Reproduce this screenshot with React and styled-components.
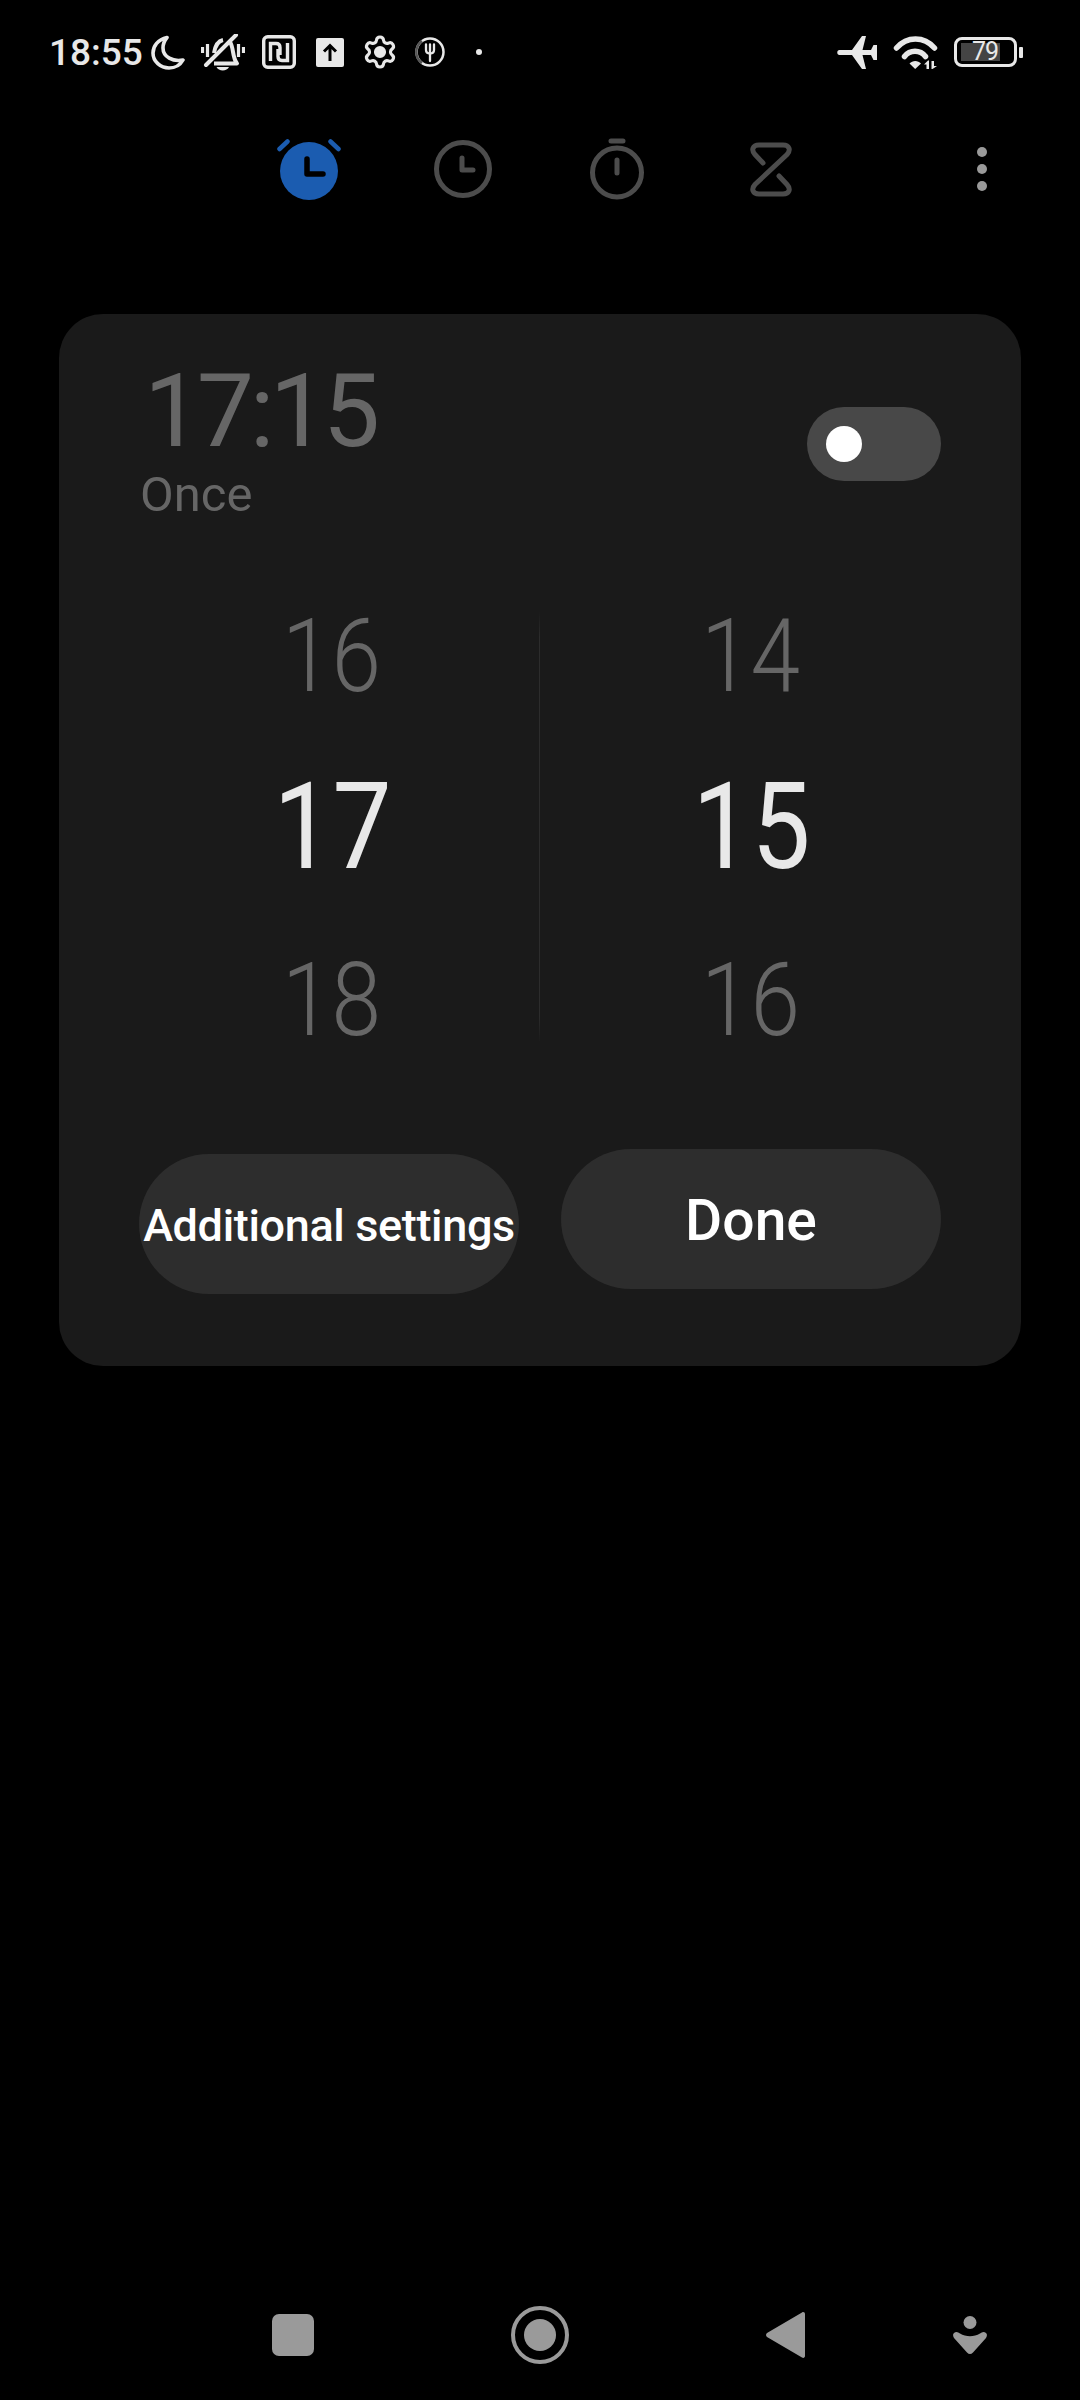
import React from 'react'
import styled, { createGlobalStyle } from 'styled-components'
import { Settings } from 'lucide-react'

const GlobalStyle = createGlobalStyle`
    html, body {
        margin: 0;
        background: #000;
    }
    * {
        box-sizing: border-box;
    }
`

const StatusIcon = ({ w, h, ml, children }) => (
    <StatusSvg width={w} height={h} viewBox={`0 0 ${w} ${h}`} $ml={ml}>{children}</StatusSvg>
)

const MoonIcon = () => (
    <StatusIcon w={34} h={35} ml={8}>
        <path d="M16 2.500C7 4.500 2 11 2 18C2 26.500 9.500 33 18 33C24.500 33 29.500 29.500 32 25C22 27 12 22 12 13C12 9 13.500 5.500 16 2.500Z" fill="none" stroke="#e8e8e8" strokeWidth="3.600" strokeLinejoin="round" />
    </StatusIcon>
)

const BellOffIcon = () => (
    <StatusIcon w={44} h={37} ml={16}>
        <g fill="none" stroke="#e8e8e8" strokeWidth="3.200">
            <path d="M1.500 13V19M6.500 10V23M37.500 10V23M42.500 13V19" />
            <path d="M13 19C14 13 17 7 22 6M29 8C33 14 31 23 36 29.500H13" strokeLinejoin="round" strokeWidth="4" />
            <path d="M5 31L35 1" strokeWidth="4" strokeLinecap="round" />
        </g>
        <path d="M15.500 33H28C26 37.500 17.500 37.500 15.500 33Z" fill="#e8e8e8" />
    </StatusIcon>
)

const NfcIcon = () => (
    <StatusIcon w={34} h={34} ml={17}>
        <g fill="none" stroke="#e8e8e8" strokeWidth="3.400">
            <rect x="1.700" y="1.700" width="30.600" height="30.600" rx="4" />
            <path d="M8.500 26V8.500H14C16.500 8.500 18 10 18 12.500V20" />
            <path d="M25.500 8V25.500H20C17.500 25.500 16 24 16 21.500V14" />
        </g>
    </StatusIcon>
)

const UploadIcon = () => (
    <StatusIcon w={28} h={29} ml={20}>
        <rect width="28" height="29" rx="2" fill="#e8e8e8" />
        <path d="M14 23V8M8 13.500L14 7.500L20 13.500" fill="none" stroke="#000" strokeWidth="3" />
    </StatusIcon>
)

const FoodIcon = () => (
    <StatusIcon w={30} h={30} ml={17}>
        <circle cx="15" cy="15" r="13.500" fill="none" stroke="#e8e8e8" strokeWidth="2.500" />
        <path d="M7 4A13.500 13.500 0 0 0 7 26" fill="none" stroke="#555" strokeWidth="2.500" />
        <path d="M11 7.500V13C11 15.500 13 16.500 15 16.500C17 16.500 19 15.500 19 13V7.500M15 7.500V24" fill="none" stroke="#e8e8e8" strokeWidth="2.300" strokeLinecap="round" />
    </StatusIcon>
)

const PlaneIcon = () => (
    <StatusIcon w={40} h={35} ml={0}>
        <path d="M2.500 15H15L25 1H29L25.500 15H34L36.500 10H40V25H36.500L34 20H25.500L29 34H25L15 20H2.500C-0.500 20 -0.500 15 2.500 15Z" fill="#e8e8e8" />
    </StatusIcon>
)

const WifiIcon = () => (
    <StatusIcon w={47} h={34} ml={16}>
        <g fill="none" stroke="#e8e8e8" strokeWidth="5.500" strokeLinecap="round">
            <path d="M3.500 13C14 1 31 1 41.500 13" />
            <path d="M11.500 21.500C17 14.500 27 14.500 32.500 21.500" />
        </g>
        <path d="M16.500 28.500C19.500 25 25 25 28 28.500L22.200 34Z" fill="#e8e8e8" />
        <path d="M31 29.500L35 25.500H36V34H33.500V29.500ZM38.500 26H41V31H44L39.500 34H38.500Z" fill="#e8e8e8" />
    </StatusIcon>
)

const AlarmIcon = () => (
    <svg width="64" height="61" viewBox="0 0 64 61">
        <circle cx="32" cy="32" r="29" fill="#1b5cb0" />
        <path d="M2.500 10L10.500 2.500M53.500 2.500L61.500 10" fill="none" stroke="#1b5cb0" strokeWidth="4.500" strokeLinecap="round" />
        <path d="M30 20V35H46" fill="none" stroke="#000" strokeWidth="5.500" strokeLinecap="round" strokeLinejoin="round" />
    </svg>
)

const ClockIcon = () => (
    <svg width="58" height="58" viewBox="0 0 58 58" fill="none" stroke="#4c4c4c" strokeWidth="5">
        <circle cx="29" cy="29" r="26.500" />
        <path d="M28 18V30H39" strokeLinecap="round" strokeLinejoin="round" />
    </svg>
)

const StopwatchIcon = () => (
    <svg width="54" height="62" viewBox="0 0 54 62" fill="none" stroke="#4c4c4c" strokeWidth="5" strokeLinecap="round">
        <circle cx="27" cy="34.500" r="24.500" />
        <path d="M21 3H33M27 22V35" />
    </svg>
)

const TimerIcon = () => (
    <svg width="42" height="55" viewBox="0 0 42 55" fill="none" stroke="#4c4c4c" strokeWidth="5" strokeLinecap="round">
        <path d="M13 21L5 12.500C1 8 2.500 3 9 3H33C39.500 3 41 8 37 12.500L5 42.500C1 47 2.500 52 9 52H33C39.500 52 41 47 37 42.500L29 34" />
    </svg>
)

const MenuIcon = () => (
    <svg width="10" height="44" viewBox="0 0 10 44" fill="#9a9a9a">
        <circle cx="5" cy="5" r="5" />
        <circle cx="5" cy="22" r="5" />
        <circle cx="5" cy="39" r="5" />
    </svg>
)

const NavSquare = () => (
    <svg width="42" height="42" viewBox="0 0 42 42">
        <rect width="42" height="42" rx="7" fill="#9a9a9a" />
    </svg>
)

const NavHome = () => (
    <svg width="58" height="58" viewBox="0 0 58 58" fill="#9a9a9a">
        <circle cx="29" cy="29" r="27" fill="none" stroke="#9a9a9a" strokeWidth="4" />
        <circle cx="29" cy="29" r="16" />
    </svg>
)

const NavBack = () => (
    <svg width="39" height="48" viewBox="0 0 39 48">
        <path d="M36 1.500C37.500 0.500 39 1.500 39 3V45C39 46.500 37.500 47.500 36 46.500L1 26C-0.300 25 -0.300 23 1 22Z" fill="#9a9a9a" />
    </svg>
)

const NavAccessibility = () => (
    <svg width="34" height="38" viewBox="0 0 34 38" fill="#9a9a9a">
        <circle cx="17" cy="6.500" r="6.500" />
        <path d="M1 17C3 15.500 5 16 7 17.500C13 21 21 21 27 17.500C29 16 31 15.500 33 17C34.500 18.500 34 20 33 22L20 36.500C18 38.500 16 38.500 14 36.500L1 22C0 20 -0.500 18.500 1 17Z" />
    </svg>
)

const hours = [
    { value: '16' },
    { value: '17', active: true },
    { value: '18' },
]

const minutes = [
    { value: '14' },
    { value: '15', active: true },
    { value: '16' },
]

const App = () => {
    return (
        <Page>
            <GlobalStyle />
            <StatusBar>
                <StatusTime>18:55</StatusTime>
                <MoonIcon />
                <BellOffIcon />
                <NfcIcon />
                <UploadIcon />
                <GearIcon size={36} strokeWidth={2.1} />
                <FoodIcon />
                <StatusDot />
                <StatusRight>
                    <PlaneIcon />
                    <WifiIcon />
                    <Battery>
                        <BatteryBody>
                            <BatteryFill>79</BatteryFill>
                        </BatteryBody>
                        <BatteryTip />
                    </Battery>
                </StatusRight>
            </StatusBar>

            <TabBar>
                <TabCell><AlarmIcon /></TabCell>
                <TabCell><ClockIcon /></TabCell>
                <TabCell><StopwatchIcon /></TabCell>
                <TabCell><TimerIcon /></TabCell>
                <TabMenu><MenuIcon /></TabMenu>
            </TabBar>

            <Card>
                <CardHeader>
                    <div>
                        <AlarmTime>17:15</AlarmTime>
                        <AlarmRepeat>Once</AlarmRepeat>
                    </div>
                    <Toggle>
                        <ToggleKnob />
                    </Toggle>
                </CardHeader>

                <Picker>
                    <PickerColumn $width={414}>
                        {hours.map(item => (
                            <PickerRow key={item.value} $active={item.active}>
                                <PickerNumber>{item.value}</PickerNumber>
                            </PickerRow>
                        ))}
                    </PickerColumn>
                    <PickerDivider />
                    <PickerColumn $width={422}>
                        {minutes.map(item => (
                            <PickerRow key={item.value} $active={item.active}>
                                <PickerNumber>{item.value}</PickerNumber>
                            </PickerRow>
                        ))}
                    </PickerColumn>
                </Picker>

                <Actions>
                    <ActionButton $small>Additional settings</ActionButton>
                    <ActionButton>Done</ActionButton>
                </Actions>
            </Card>

            <NavBar>
                <NavCell><NavSquare /></NavCell>
                <NavCell $shift={2}><NavHome /></NavCell>
                <NavCell><NavBack /></NavCell>
                <NavExtra><NavAccessibility /></NavExtra>
            </NavBar>
        </Page>
    )
}

const Page = styled.div`
    width: 1080px;
    height: 2400px;
    display: flex;
    flex-direction: column;
    background: #000;
    font-family: Roboto, "Liberation Sans", sans-serif;
    overflow: hidden;
`

const StatusBar = styled.div`
    height: 104px;
    display: flex;
    align-items: center;
    padding: 0 57px 0 49px;
    color: #e8e8e8;
`

const StatusTime = styled.span`
    font-size: 37px;
    font-weight: 500;
    line-height: 1;
`

const StatusSvg = styled.svg`
    flex: none;
    margin-left: ${props => props.$ml}px;
`

const GearIcon = styled(Settings)`
    flex: none;
    margin-left: 18px;
    color: #e8e8e8;
    circle {
        fill: #e8e8e8;
    }
`

const StatusDot = styled.span`
    width: 6px;
    height: 6px;
    margin-left: 31px;
    border-radius: 50%;
    background: #e8e8e8;
`

const StatusRight = styled.div`
    display: flex;
    align-items: center;
    margin-left: auto;
`

const Battery = styled.div`
    display: flex;
    align-items: center;
    margin-left: 14px;
`

const BatteryBody = styled.div`
    width: 63px;
    height: 30px;
    padding: 3px 4px;
    border: 3px solid #e8e8e8;
    border-radius: 8px;
    display: flex;
    align-items: stretch;
`

const BatteryFill = styled.div`
    width: 39px;
    background: #444;
    color: #e8e8e8;
    font-size: 25px;
    line-height: 18px;
    letter-spacing: -1px;
    text-align: right;
    padding-right: 2px;
`

const BatteryTip = styled.div`
    width: 4px;
    height: 11px;
    margin-left: 2px;
    border-radius: 1px;
    background: #e8e8e8;
`

const TabBar = styled.div`
    height: 130px;
    display: flex;
    align-items: center;
    padding: 0 93px 0 232px;
`

const TabCell = styled.div`
    width: 154px;
    display: flex;
    justify-content: center;
`

const TabMenu = styled.div`
    margin-left: auto;
    display: flex;
`

const Card = styled.div`
    width: 962px;
    height: 1052px;
    margin: 80px 0 0 59px;
    padding-top: 47px;
    border-radius: 44px;
    background: #1a1a1a;
`

const CardHeader = styled.div`
    display: flex;
    justify-content: space-between;
    align-items: flex-start;
    padding: 0 80px 0 81px;
    margin-bottom: 44px;
`

const AlarmTime = styled.div`
    margin-left: 4px;
    font-size: 102px;
    font-weight: 400;
    line-height: 100px;
    color: #666;
    letter-spacing: -4.5px;
`

const AlarmRepeat = styled.div`
    margin-top: 4px;
    font-size: 49px;
    font-weight: 400;
    line-height: 60px;
    color: #666;
`

const Toggle = styled.div`
    width: 134px;
    height: 74px;
    margin-top: 46px;
    padding-left: 19px;
    border-radius: 37px;
    background: #484848;
    display: flex;
    align-items: center;
`

const ToggleKnob = styled.div`
    width: 36px;
    height: 36px;
    border-radius: 50%;
    background: #fff;
`

const Picker = styled.div`
    display: flex;
    align-items: center;
    padding-left: 66px;
`

const PickerColumn = styled.div`
    width: ${props => props.$width}px;
`

const PickerRow = styled.div`
    height: 172px;
    padding-top: ${props => (props.$active ? 0 : 2)}px;
    display: flex;
    align-items: center;
    justify-content: center;
    font-size: ${props => (props.$active ? 120 : 102)}px;
    font-weight: ${props => (props.$active ? 400 : 350)};
    color: ${props => (props.$active ? '#e8e8e8' : '#666')};
`

const PickerNumber = styled.span`
    display: inline-block;
    transform: scaleX(0.875);
`

const PickerDivider = styled.div`
    width: 1px;
    height: 430px;
    background: linear-gradient(to bottom, #1a1a1a, #2c2c2c 6%, #2c2c2c 94%, #1a1a1a);
`

const Actions = styled.div`
    display: flex;
    align-items: flex-start;
    gap: 42px;
    padding-left: 80px;
    margin-top: 64px;
`

const ActionButton = styled.div`
    width: 380px;
    height: 140px;
    margin-top: ${props => (props.$small ? 5 : 0)}px;
    padding-top: ${props => (props.$small ? 2 : 3)}px;
    border-radius: 70px;
    background: #2d2d2d;
    color: #fff;
    font-size: ${props => (props.$small ? 45 : 57)}px;
    font-weight: 500;
    letter-spacing: ${props => (props.$small ? -0.35 : 0)}px;
    white-space: nowrap;
    display: flex;
    align-items: center;
    justify-content: center;
`

const NavBar = styled.div`
    margin-top: auto;
    height: 130px;
    display: flex;
    align-items: center;
    padding: 0 0 0 170px;
`

const NavCell = styled.div`
    width: 246px;
    padding-left: ${props => props.$shift || 0}px;
    display: flex;
    justify-content: center;
`

const NavExtra = styled.div`
    margin-left: 45px;
    display: flex;
`

export default App
